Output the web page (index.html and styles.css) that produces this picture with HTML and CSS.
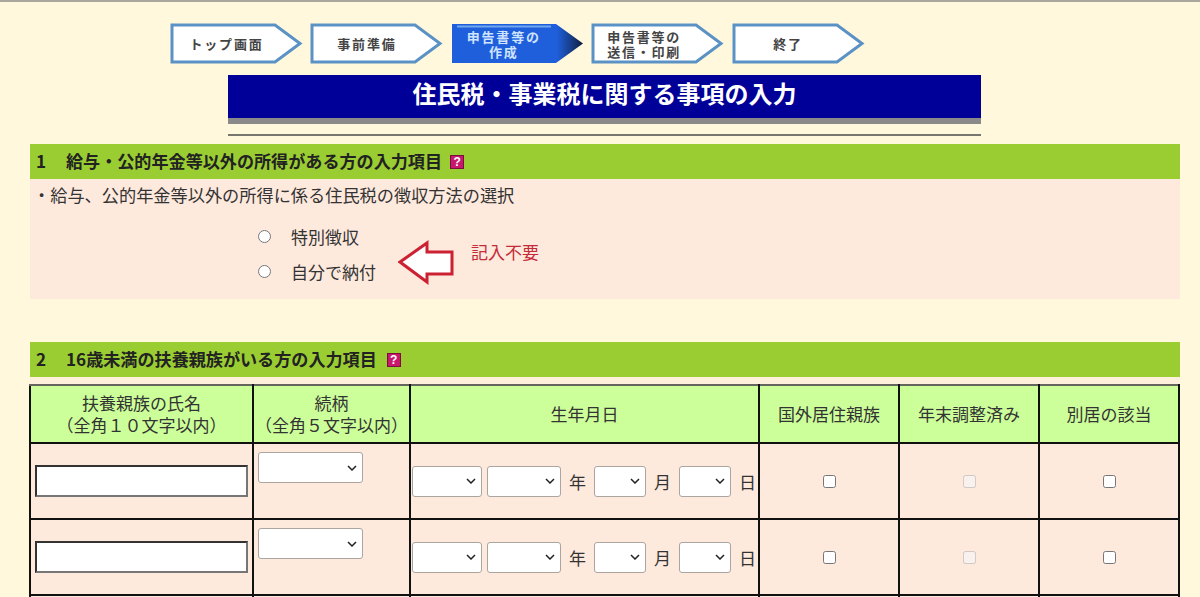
FILE: index.html
```html
<!DOCTYPE html>
<html lang="ja">
<head>
<meta charset="utf-8">
<title>住民税・事業税に関する事項の入力</title>
<link rel="stylesheet" href="styles.css">
</head>
<body>
<nav class="steps">
  <div class="step"><svg class="step-shape" width="133" height="41" viewBox="0 0 133 41"><polygon points="2,2 105,2 130,20.5 105,39 2,39" fill="#fff" stroke="#5b92c6" stroke-width="3"/></svg><span class="step-label">トップ画面</span></div>
  <div class="step"><svg class="step-shape" width="133" height="41" viewBox="0 0 133 41"><polygon points="2,2 105,2 130,20.5 105,39 2,39" fill="#fff" stroke="#5b92c6" stroke-width="3"/></svg><span class="step-label">事前準備</span></div>
  <div class="step step-active"><svg class="step-shape" width="133" height="41" viewBox="0 0 133 41"><defs><linearGradient id="tip" x1="0" x2="1" y1="0" y2="0"><stop offset="0" stop-color="#1f5fdc"/><stop offset=".8" stop-color="#1f5fdc"/><stop offset=".9" stop-color="#17408e"/><stop offset="1" stop-color="#0d1c40"/></linearGradient></defs><polygon points="1,1 105,1 132,20.5 105,40 1,40" fill="url(#tip)"/><line x1="6" y1="3.5" x2="100" y2="3.5" stroke="#6fa8ec" stroke-width="2"/></svg><span class="step-label step-label-two">申告書等の<br>作成</span></div>
  <div class="step"><svg class="step-shape" width="133" height="41" viewBox="0 0 133 41"><polygon points="2,2 105,2 130,20.5 105,39 2,39" fill="#fff" stroke="#5b92c6" stroke-width="3"/></svg><span class="step-label step-label-two">申告書等の<br>送信・印刷</span></div>
  <div class="step"><svg class="step-shape" width="133" height="41" viewBox="0 0 133 41"><polygon points="2,2 105,2 130,20.5 105,39 2,39" fill="#fff" stroke="#5b92c6" stroke-width="3"/></svg><span class="step-label">終了</span></div>
</nav>

<h1 class="title">住民税・事業税に関する事項の入力</h1>
<div class="title-rule"></div>

<main class="content">
  <section>
    <h2 class="section-head"><span class="section-no">1</span>給与・公的年金等以外の所得がある方の入力項目<span class="help">?</span></h2>
    <div class="panel">
      <p class="panel-text">・給与、公的年金等以外の所得に係る住民税の徴収方法の選択</p>
      <div class="choice-row">
        <div class="choices">
          <label class="choice"><input type="radio" name="pay" class="radio">特別徴収</label>
          <label class="choice"><input type="radio" name="pay" class="radio">自分で納付</label>
        </div>
        <svg class="arrow" width="56" height="50" viewBox="0 0 56 50"><polygon points="2,25 29,6 29,15 54,15 54,37 29,37 29,45" fill="#fff" stroke="#cc2033" stroke-width="3"/></svg>
        <span class="note">記入不要</span>
      </div>
    </div>
  </section>

  <section class="section-two">
    <h2 class="section-head"><span class="section-no">2</span>16歳未満の扶養親族がいる方の入力項目<span class="help">?</span></h2>
    <div class="table-wrap">
      <table class="family">
        <colgroup>
          <col class="c-name"><col class="c-rel"><col class="c-date"><col class="c-flag"><col class="c-flag"><col class="c-flag">
        </colgroup>
        <thead>
          <tr>
            <th>扶養親族の氏名<br>（全角１０文字以内）</th>
            <th>続柄<br>（全角５文字以内）</th>
            <th>生年月日</th>
            <th>国外居住親族</th>
            <th>年末調整済み</th>
            <th>別居の該当</th>
          </tr>
        </thead>
        <tbody>
          <tr>
            <td class="cell-name"><input type="text" class="name-input"></td>
            <td class="cell-rel"><select class="sel sel-rel"></select></td>
            <td class="cell-date"><div class="date"><select class="sel sel-era"></select><select class="sel sel-year"></select><span class="unit">年</span><select class="sel sel-md"></select><span class="unit">月</span><select class="sel sel-md"></select><span class="unit">日</span></div></td>
            <td class="cell-check"><input type="checkbox" class="check"></td>
            <td class="cell-check"><input type="checkbox" class="check" disabled></td>
            <td class="cell-check"><input type="checkbox" class="check"></td>
          </tr>
          <tr>
            <td class="cell-name"><input type="text" class="name-input"></td>
            <td class="cell-rel"><select class="sel sel-rel"></select></td>
            <td class="cell-date"><div class="date"><select class="sel sel-era"></select><select class="sel sel-year"></select><span class="unit">年</span><select class="sel sel-md"></select><span class="unit">月</span><select class="sel sel-md"></select><span class="unit">日</span></div></td>
            <td class="cell-check"><input type="checkbox" class="check"></td>
            <td class="cell-check"><input type="checkbox" class="check" disabled></td>
            <td class="cell-check"><input type="checkbox" class="check"></td>
          </tr>
          <tr>
            <td class="cell-name"></td><td></td><td></td><td></td><td></td><td></td>
          </tr>
        </tbody>
      </table>
    </div>
  </section>
</main>
</body>
</html>
```

FILE: styles.css
```css
html, body {
  margin: 0;
  height: 597px;
  overflow: hidden;
}
body {
  box-sizing: border-box;
  border-top: 2px solid #a9a79c;
  background: #fff8dc;
  color: #333;
  font-family: "Noto Sans CJK JP", "Noto Sans", sans-serif;
  font-size: 17px;
  line-height: 25px;
}
.steps {
  display: flex;
  gap: 7.4px;
  margin: 21px 0 0 170px;
  height: 41px;
}
.step {
  display: grid;
  width: 133px;
  height: 41px;
}
.step-shape, .step-label {
  grid-area: 1 / 1;
}
.step-label {
  align-self: center;
  padding-right: 20px;
  text-align: center;
  font-size: 13px;
  line-height: 15px;
  font-weight: 700;
  letter-spacing: 1.8px;
  color: #444;
}
.step-label-two {
  padding-right: 27px;
}
.step-active .step-label {
  color: #cfe4ff;
}
.title {
  box-sizing: border-box;
  width: 753px;
  height: 49px;
  margin: 11px 0 0 228px;
  border-bottom: 6px solid #8a8a8a;
  background: #000099;
  color: #fff;
  font-size: 24px;
  line-height: 35px;
  font-weight: 700;
  text-align: center;
}
.title-rule {
  width: 753px;
  height: 2px;
  margin: 10px 0 0 228px;
  background: #77776f;
}
.content {
  width: 1150px;
  margin: 8px 0 0 30px;
}
.section-head {
  box-sizing: border-box;
  display: flex;
  align-items: center;
  height: 35px;
  margin: 0;
  padding: 0 0 2px 6px;
  background: #9acd32;
  color: #222;
  font-size: 17.1px;
  line-height: 33px;
  font-weight: 700;
}
.section-no {
  width: 30px;
}
.help {
  width: 14px;
  height: 14px;
  margin: 2px 0 0 8px;
  background: #c8186e;
  border: 1px solid #7a1040;
  box-sizing: border-box;
  color: #fff;
  font-size: 12px;
  font-weight: 700;
  line-height: 12px;
  text-align: center;
  font-family: "Liberation Sans", sans-serif;
}
.section-two .help {
  margin-left: 10px;
}
.panel {
  box-sizing: border-box;
  height: 120px;
  background: #fee9dd;
  padding: 3px 3px 0;
}
.panel-text {
  margin: 0;
  font-size: 17.2px;
}
.choice-row {
  display: flex;
  align-items: flex-start;
  margin-top: 16px;
}
.choices {
  display: flex;
  flex-direction: column;
  gap: 10px;
  margin: 1px 0 0 219px;
  width: 140px;
}
.choice {
  display: flex;
  align-items: center;
  font-size: 17px;
}
.radio {
  width: 13px;
  height: 13px;
  margin: 0 20px 0 6px;
}
.arrow {
  margin: 14px 0 0 6px;
}
.note {
  margin: 16px 0 0 17px;
  color: #c42a38;
  font-size: 17px;
}
.section-two {
  margin-top: 43px;
}
.table-wrap {
  padding-top: 7px;
  background: #fdf1dc;
}
.family {
  width: 1150px;
  margin-left: -1px;
  table-layout: fixed;
  border-collapse: collapse;
  border-top: 2px solid #66665e;
}
.c-name { width: 223px; }
.c-rel { width: 157px; }
.c-date { width: 349px; }
.c-flag { width: 140px; }
.family th, .family td {
  border: 2px solid #111;
  padding: 0;
  background: #fee9dd;
}
.family thead tr { height: 58px; }
.family tbody tr { height: 76px; }
.family th {
  background: #ccff99;
  font-size: 17px;
  line-height: 22px;
  font-weight: 400;
  text-align: center;
}
.family tr:first-child th {
  border-top: 2px solid #66665e;
}
.cell-name { text-align: center; }
.name-input {
  box-sizing: border-box;
  display: block;
  width: 213px;
  height: 32px;
  margin: 0 auto;
  border: 2px solid;
  border-color: #333 #767676 #767676 #333;
  background: #fff;
}
.family .cell-rel {
  vertical-align: top;
  padding: 8px 0 0 4px;
}
.sel {
  appearance: none;
  box-sizing: border-box;
  display: block;
  flex: none;
  height: 31px;
  padding: 0;
  border: 1px solid #aaa5a0;
  border-radius: 3px;
  background: #fff url("data:image/svg+xml,%3Csvg xmlns='http://www.w3.org/2000/svg' width='10' height='6' viewBox='0 0 10 6'%3E%3Cpath d='M1 1l4 4 4-4' fill='none' stroke='%23222' stroke-width='1.5'/%3E%3C/svg%3E") no-repeat right 5px center;
}
.sel-rel { width: 105px; }
.sel-era { width: 70px; margin-right: 5px; }
.sel-year { width: 74px; }
.sel-md { width: 52px; }
.date {
  display: flex;
  align-items: center;
  padding-left: 1px;
}
.unit {
  flex: none;
  width: 33px;
  text-align: center;
  font-size: 17px;
}
.cell-check { text-align: center; }
.check {
  display: block;
  width: 13px;
  height: 13px;
  margin: 0 auto;
}
```
